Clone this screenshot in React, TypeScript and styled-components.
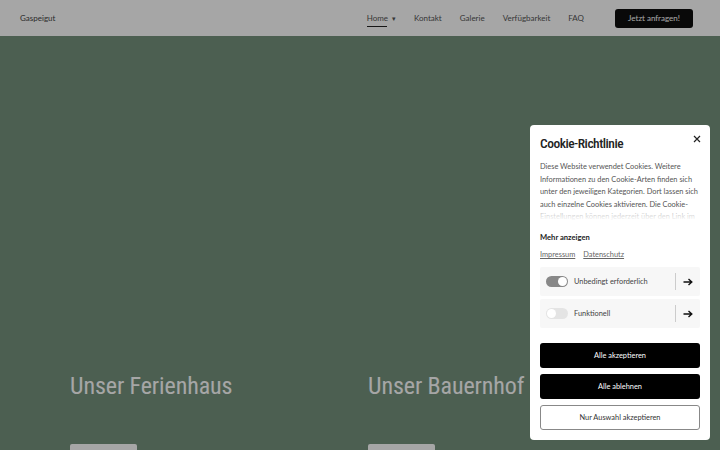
import React from 'react'
import styled, { createGlobalStyle } from 'styled-components'

const GlobalStyle = createGlobalStyle`
  html, body {
    margin: 0;
    padding: 0;
  }
  body {
    font-family: Lato, 'Open Sans', sans-serif;
    overflow: hidden;
  }
`

const navItems = ['Kontakt', 'Galerie', 'Verfügbarkeit', 'FAQ']

const categories = [
  { label: 'Unbedingt erforderlich', on: true },
  { label: 'Funktionell', on: false },
]

export default function App() {
  return (
    <>
      <GlobalStyle />
      <Page>
        <Header>
          <Brand>Gaspeigut</Brand>
          <Nav>
            <NavLink $active>
              Home <Caret>▾</Caret>
            </NavLink>
            {navItems.map((item) => (
              <NavLink key={item}>{item}</NavLink>
            ))}
          </Nav>
          <CtaButton>Jetzt anfragen!</CtaButton>
        </Header>
        <Features>
          <Feature>
            <FeatureTitle>Unser Ferienhaus</FeatureTitle>
            <FeatureButton />
          </Feature>
          <Feature>
            <FeatureTitle>Unser Bauernhof</FeatureTitle>
            <FeatureButton />
          </Feature>
        </Features>
      </Page>
      <Backdrop />
      <CookieBox>
        <TitleRow>
          <CookieTitle>Cookie-Richtlinie</CookieTitle>
          <CloseButton aria-label="Schließen">
            <svg width="8" height="8" viewBox="0 0 8 8">
              <path d="M1 1 L7 7 M7 1 L1 7" stroke="#222" strokeWidth="1.2" />
            </svg>
          </CloseButton>
        </TitleRow>
        <Description>
          Diese Website verwendet Cookies. Weitere Informationen zu den Cookie-Arten finden sich
          unter den jeweiligen Kategorien. Dort lassen sich auch einzelne Cookies aktivieren. Die
          Cookie-Einstellungen können jederzeit über den Link im Footer geändert werden.
        </Description>
        <MoreLink>Mehr anzeigen</MoreLink>
        <LegalLinks>
          <LegalLink>Impressum</LegalLink>
          <LegalLink>Datenschutz</LegalLink>
        </LegalLinks>
        <CategoryList>
          {categories.map((c) => (
            <CategoryRow key={c.label}>
              <Toggle $on={c.on}>
                <Knob $on={c.on} />
              </Toggle>
              <CategoryLabel>{c.label}</CategoryLabel>
              <Divider />
              <ArrowButton>
                <svg width="10" height="8" viewBox="0 0 10 8">
                  <path
                    d="M0.5 4 H8.5 M5.5 1 L8.8 4 L5.5 7"
                    stroke="#111"
                    strokeWidth="1.4"
                    fill="none"
                  />
                </svg>
              </ArrowButton>
            </CategoryRow>
          ))}
        </CategoryList>
        <Actions>
          <ActionButton $variant="solid">Alle akzeptieren</ActionButton>
          <ActionButton $variant="solid">Alle ablehnen</ActionButton>
          <ActionButton $variant="outline">Nur Auswahl akzeptieren</ActionButton>
        </Actions>
      </CookieBox>
    </>
  )
}

const condensed = `'Roboto Condensed', 'DejaVu Sans Condensed', 'Liberation Sans Narrow', 'Arial Narrow', sans-serif`

const Page = styled.div`
  height: 450px;
  background: #75927d;
  display: flex;
  flex-direction: column;
`

const Header = styled.header`
  height: 36px;
  background: #ffffff;
  display: flex;
  align-items: center;
  padding: 0 27px 0 20px;
  flex-shrink: 0;
`

const Brand = styled.div`
  font-size: 8px;
  color: #444;
  flex: 1;
`

const Nav = styled.nav`
  display: flex;
  align-items: center;
  gap: 18px;
  margin-right: 31px;
`

const NavLink = styled.a<{ $active?: boolean }>`
  font-size: 8px;
  color: #555;
  position: relative;
  display: flex;
  align-items: center;
  gap: 4px;
  cursor: pointer;
  &::after {
    content: '';
    display: ${(p) => (p.$active ? 'block' : 'none')};
    position: absolute;
    left: 0;
    width: 20px;
    bottom: -4px;
    height: 1px;
    background: #222;
  }
`

const Caret = styled.span`
  font-size: 7px;
`

const CtaButton = styled.button`
  width: 78px;
  height: 19px;
  background: #0f0f0f;
  color: #fff;
  border: none;
  border-radius: 3px;
  font-family: Lato, sans-serif;
  font-size: 8px;
  cursor: pointer;
`

const Features = styled.section`
  display: grid;
  grid-template-columns: 298px 298px;
  padding: 336px 0 0 70px;
`

const Feature = styled.div`
  display: flex;
  flex-direction: column;
  align-items: flex-start;
`

const FeatureTitle = styled.h2`
  margin: 0;
  font-family: ${condensed};
  font-weight: 400;
  font-size: 24px;
  line-height: 28px;
  letter-spacing: -0.1px;
  color: #ffffff;
`

const FeatureButton = styled.div`
  margin-top: 44px;
  width: 67px;
  height: 20px;
  background: #ffffff;
  border-radius: 2px;
`

const Backdrop = styled.div`
  position: fixed;
  inset: 0;
  background: rgba(0, 0, 0, 0.35);
`

const CookieBox = styled.div`
  position: fixed;
  right: 10px;
  bottom: 10px;
  width: 180px;
  box-sizing: border-box;
  background: #fff;
  border-radius: 4px;
  padding: 9px 10px 10px;
  display: flex;
  flex-direction: column;
`

const TitleRow = styled.div`
  display: flex;
  justify-content: space-between;
  align-items: flex-start;
`

const CookieTitle = styled.h3`
  margin: 0;
  font-family: ${condensed};
  font-weight: 500;
  font-size: 13.5px;
  letter-spacing: -0.5px;
  line-height: 18px;
  color: #222;
`

const CloseButton = styled.button`
  border: none;
  background: none;
  padding: 0;
  margin: 1px -1px 0 0;
  cursor: pointer;
  display: flex;
`

const Description = styled.p`
  margin: 9px 0 0;
  font-size: 7.4px;
  line-height: 12.5px;
  color: #555;
  height: 60px;
  overflow: hidden;
  position: relative;
  &::after {
    content: '';
    position: absolute;
    left: 0;
    right: 0;
    bottom: 0;
    height: 14px;
    background: linear-gradient(rgba(255, 255, 255, 0.4), #fff);
  }
`

const MoreLink = styled.div`
  margin-top: 11px;
  font-size: 7.6px;
  font-weight: 700;
  color: #222;
`

const LegalLinks = styled.div`
  display: flex;
  gap: 8px;
  margin-top: 8px;
`

const LegalLink = styled.a`
  font-size: 7.4px;
  color: #666;
  text-decoration: underline;
  cursor: pointer;
`

const CategoryList = styled.div`
  display: flex;
  flex-direction: column;
  gap: 3px;
  margin-top: 8px;
`

const CategoryRow = styled.div`
  height: 29px;
  background: #f7f7f7;
  border-radius: 2px;
  display: flex;
  align-items: center;
  padding: 0 4px 0 6px;
`

const Toggle = styled.div<{ $on: boolean }>`
  width: 22px;
  height: 11px;
  border-radius: 6px;
  background: ${(p) => (p.$on ? '#888' : '#e4e4e4')};
  position: relative;
  flex-shrink: 0;
`

const Knob = styled.div<{ $on: boolean }>`
  position: absolute;
  top: 1px;
  left: ${(p) => (p.$on ? '12px' : '1px')};
  width: 9px;
  height: 9px;
  border-radius: 50%;
  background: #fff;
`

const CategoryLabel = styled.span`
  margin-left: 6px;
  font-size: 7.4px;
  color: #444;
  flex: 1;
`

const Divider = styled.div`
  width: 1px;
  height: 17px;
  background: #ccc;
`

const ArrowButton = styled.div`
  width: 20px;
  display: flex;
  justify-content: center;
  padding-left: 3px;
  box-sizing: border-box;
`

const Actions = styled.div`
  display: flex;
  flex-direction: column;
  gap: 6px;
  margin-top: 15px;
`

const ActionButton = styled.button<{ $variant: 'solid' | 'outline' }>`
  height: 25px;
  border-radius: 3px;
  font-family: Lato, sans-serif;
  font-size: 7.4px;
  cursor: pointer;
  background: ${(p) => (p.$variant === 'solid' ? '#000' : '#fff')};
  color: ${(p) => (p.$variant === 'solid' ? '#fff' : '#333')};
  border: ${(p) => (p.$variant === 'solid' ? 'none' : '1px solid #888')};
`
